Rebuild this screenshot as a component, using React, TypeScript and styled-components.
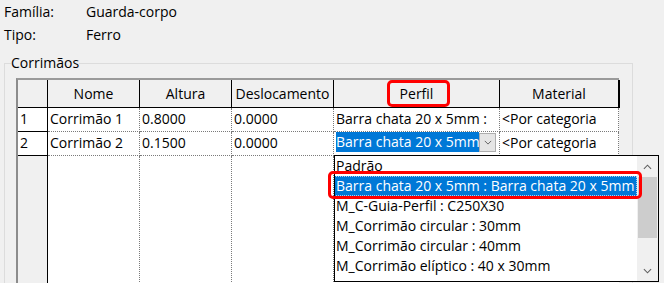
import React from 'react';
import styled, { createGlobalStyle } from 'styled-components';

const GlobalStyle = createGlobalStyle`
  html, body {
    margin: 0;
    padding: 0;
    background: #f0f0f0;
    height: 283px;
    overflow: hidden;
  }
  body {
    font-family: "Open Sans", "Noto Sans", sans-serif;
    font-size: 14px;
    color: #000;
  }
`;

const Page = styled.div`
  width: 664px;
  height: 283px;
  overflow: hidden;
`;

const InfoGrid = styled.div`
  display: grid;
  grid-template-columns: 82px 1fr;
  padding-left: 4px;
  line-height: 23px;
`;

const GroupBox = styled.fieldset`
  box-sizing: border-box;
  margin: 7px 0 0 4px;
  width: 629px;
  height: 260px;
  border: 1px solid #dcdcdc;
  padding: 5px 0 0 11px;
  min-width: 0;
`;

const Legend = styled.legend`
  margin-left: -5px;
  padding: 0;
  line-height: 20px;
`;

const GridWrap = styled.div`
  position: relative;
  width: 603px;
`;

const Table = styled.div`
  display: grid;
  grid-template-columns: 30px 92px 92px 102px 166px 119px;
  grid-template-rows: 28px 24px 24px 200px;
  border-top: 2px solid #9a9a9a;
  border-left: 2px solid #8c8c8c;
  background: #f0f0f0;
  width: 601px;
`;

type CellKind = 'head' | 'rowhead' | 'data' | 'fillhead' | 'filldata';

const Cell = styled.div<{ $kind: CellKind; $last?: boolean }>`
  box-sizing: border-box;
  white-space: nowrap;
  overflow: hidden;
  padding-left: 2px;
  line-height: 22px;
  border-right: ${p =>
    p.$kind === 'data' || p.$kind === 'filldata'
      ? '1px dotted #7a7a7a'
      : p.$last
      ? '2px solid #000'
      : '1px solid #000'};
  border-bottom: ${p =>
    p.$kind === 'head' || p.$kind === 'rowhead'
      ? '1px solid #000'
      : p.$kind === 'data'
      ? '1px dotted #7a7a7a'
      : 'none'};
  background: ${p => (p.$kind === 'head' || p.$kind === 'fillhead' ? '#f0f0f0' : '#fff')};
  ${p =>
    p.$kind === 'head' &&
    `
    padding-left: 0;
    text-align: center;
    line-height: 27px;
  `}
  ${p => p.$last && p.$kind === 'head' && `margin-right: -1px;`}
`;

const EditCell = styled(Cell)`
  display: flex;
  align-items: flex-start;
  padding-right: 3px;
`;

const Selected = styled.span`
  flex: 1;
  background: #0078d7;
  color: #fff;
  line-height: 20px;
  overflow: hidden;
`;

const DropButton = styled.div`
  box-sizing: border-box;
  width: 17px;
  height: 19px;
  margin-top: 1px;
  background: #e5e5e5;
  border: 1px solid #adadad;
  display: flex;
  align-items: center;
  justify-content: center;
`;

const DropList = styled.div`
  position: absolute;
  left: 318px;
  top: 77px;
  box-sizing: border-box;
  width: 325px;
  height: 127px;
  border: 1px solid #000;
  background: #fff;
  display: flex;
`;

const Items = styled.div`
  flex: 1;
  overflow: hidden;
`;

const Item = styled.div<{ $active?: boolean }>`
  box-sizing: border-box;
  height: 20px;
  line-height: 18px;
  padding-left: 1px;
  white-space: nowrap;
  background: ${p => (p.$active ? '#0078d7' : 'transparent')};
  color: ${p => (p.$active ? '#fff' : '#000')};
  border: 1px dotted ${p => (p.$active ? '#a9cdf0' : 'transparent')};
  margin-left: -1px;
`;

const ScrollBar = styled.div`
  width: 21px;
  background: #f0f0f0;
  display: flex;
  flex-direction: column;
`;

const ScrollArrow = styled.div`
  height: 21px;
  display: flex;
  align-items: center;
  justify-content: center;
`;

const ScrollTrack = styled.div`
  flex: 1;
`;

const Thumb = styled.div`
  margin: 0 1px;
  height: 61px;
  background: #cdcdcd;
`;

const Callout = styled.div<{ $left: number; $top: number; $w: number; $h: number }>`
  position: absolute;
  left: ${p => p.$left}px;
  top: ${p => p.$top}px;
  width: ${p => p.$w}px;
  height: ${p => p.$h}px;
  box-sizing: border-box;
  border: 3px solid #f00;
  border-radius: 5px;
  pointer-events: none;
`;

const Chevron = ({ up, size = 9 }: { up?: boolean; size?: number }) => (
  <svg width={size} height={Math.ceil(size / 2) + 1} viewBox="0 0 10 6">
    <polyline
      points={up ? '1,5 5,1 9,5' : '1,1 5,5 9,1'}
      fill="none"
      stroke="#606060"
      strokeWidth="1.2"
    />
  </svg>
);

const heads = ['', 'Nome', 'Altura', 'Deslocamento', 'Perfil', 'Material'];

const profiles = [
  'Padrão',
  'Barra chata 20 x 5mm : Barra chata 20 x 5mm',
  'M_C-Guia-Perfil : C250X30',
  'M_Corrimão circular : 30mm',
  'M_Corrimão circular : 40mm',
  'M_Corrimão elíptico : 40 x 30mm',
];

const App = () => {
  return (
    <Page>
      <GlobalStyle />
      <InfoGrid>
        <span>Família:</span>
        <span>Guarda-corpo</span>
        <span>Tipo:</span>
        <span>Ferro</span>
      </InfoGrid>
      <GroupBox>
        <Legend>Corrimãos</Legend>
        <GridWrap>
          <Table>
            {heads.map((h, i) => (
              <Cell key={i} $kind="head" $last={i === heads.length - 1}>{h}</Cell>
            ))}

            <Cell $kind="rowhead">1</Cell>
            <Cell $kind="data">Corrimão 1</Cell>
            <Cell $kind="data">0.8000</Cell>
            <Cell $kind="data">0.0000</Cell>
            <Cell $kind="data">Barra chata 20 x 5mm :</Cell>
            <Cell $kind="data">&lt;Por categoria</Cell>

            <Cell $kind="rowhead">2</Cell>
            <Cell $kind="data">Corrimão 2</Cell>
            <Cell $kind="data">0.1500</Cell>
            <Cell $kind="data">0.0000</Cell>
            <EditCell $kind="data">
              <Selected>Barra chata 20 x 5mm</Selected>
              <DropButton>
                <Chevron size={8} />
              </DropButton>
            </EditCell>
            <Cell $kind="data">&lt;Por categoria</Cell>

            <Cell $kind="fillhead" />
            <Cell $kind="filldata" />
            <Cell $kind="filldata" />
            <Cell $kind="filldata" />
            <Cell $kind="filldata" />
            <Cell $kind="filldata" />
          </Table>

          <DropList>
            <Items>
              {profiles.map((p, i) => (
                <Item key={p} $active={i === 1}>{p}</Item>
              ))}
            </Items>
            <ScrollBar>
              <ScrollArrow>
                <Chevron up />
              </ScrollArrow>
              <ScrollTrack>
                <Thumb />
              </ScrollTrack>
              <ScrollArrow>
                <Chevron />
              </ScrollArrow>
            </ScrollBar>
          </DropList>

          <Callout $left={371} $top={2} $w={63} $h={27} />
          <Callout $left={312} $top={93} $w={314} $h={28} />
        </GridWrap>
      </GroupBox>
    </Page>
  );
};

export default App;
